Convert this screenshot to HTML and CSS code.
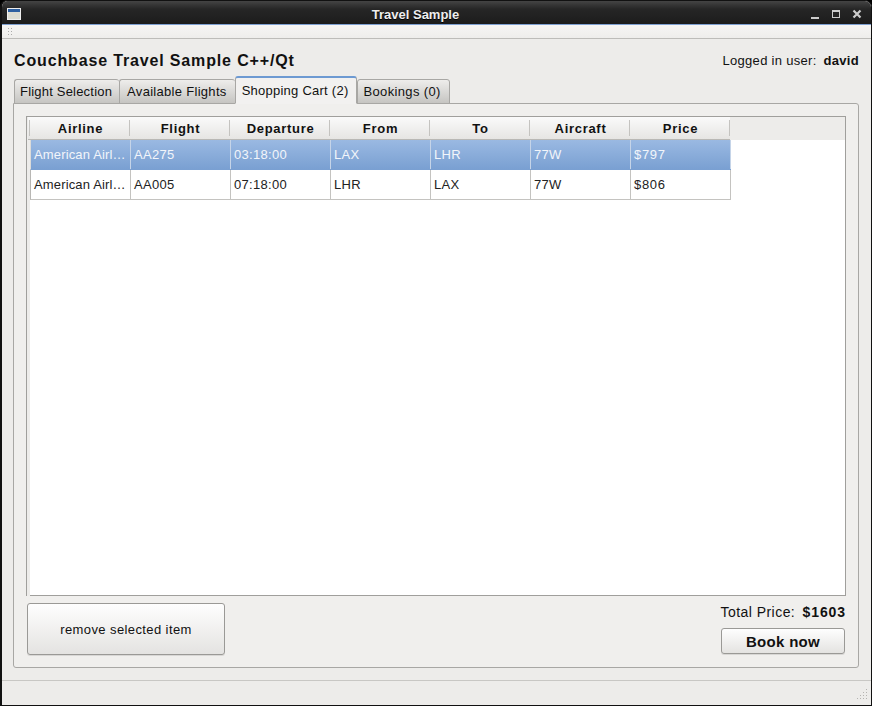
FILE: index.html
```html
<!DOCTYPE html>
<html lang="en">
<head>
  <meta charset="UTF-8">
  <title>Travel Sample</title>
  <link rel="stylesheet" href="styles.css">
</head>
<body>
  <div class="window">
    <div class="titlebar">
      <span class="win-icon"></span>
      <span class="win-title">Travel Sample</span>
      <div class="win-buttons">
        <svg width="12" height="12" viewBox="0 0 12 12"><rect x="2" y="9" width="8" height="2" fill="#ccc"/></svg>
        <svg width="12" height="12" viewBox="0 0 12 12"><rect x="2.5" y="2.5" width="7" height="7" fill="none" stroke="#ccc" stroke-width="1"/><rect x="2" y="2" width="8" height="2" fill="#ccc"/></svg>
        <svg width="12" height="12" viewBox="0 0 12 12"><path d="M2.5 2.5 L9.5 9.5 M9.5 2.5 L2.5 9.5" stroke="#ccc" stroke-width="2.2"/></svg>
      </div>
    </div>
    <div class="toolbar"><span class="grip"></span></div>

    <div class="content">
      <div class="top-row">
        <h1>Couchbase Travel Sample C++/Qt</h1>
        <div class="user">Logged in user: <b>david</b></div>
      </div>

      <div class="tabs">
        <div class="tab">Flight Selection</div>
        <div class="tab">Available Flights</div>
        <div class="tab active">Shopping Cart (2)</div>
        <div class="tab">Bookings (0)</div>
      </div>

      <div class="panel">
        <div class="table-box">
          <div class="thead">
            <div class="th">Airline</div>
            <div class="th">Flight</div>
            <div class="th">Departure</div>
            <div class="th">From</div>
            <div class="th">To</div>
            <div class="th">Aircraft</div>
            <div class="th">Price</div>
          </div>
          <div class="tbody">
            <div class="row selected">
              <div class="td">American Airl…</div>
              <div class="td">AA275</div>
              <div class="td">03:18:00</div>
              <div class="td">LAX</div>
              <div class="td">LHR</div>
              <div class="td">77W</div>
              <div class="td">$797</div>
            </div>
            <div class="row">
              <div class="td">American Airl…</div>
              <div class="td">AA005</div>
              <div class="td">07:18:00</div>
              <div class="td">LHR</div>
              <div class="td">LAX</div>
              <div class="td">77W</div>
              <div class="td">$806</div>
            </div>
          </div>
        </div>

        <div class="bottom-row">
          <button class="btn remove">remove selected item</button>
          <div class="checkout">
            <div class="total">Total Price: <b>$1603</b></div>
            <button class="btn book">Book now</button>
          </div>
        </div>
      </div>
    </div>

    <div class="statusbar">
      <svg class="size-grip" width="11" height="11" viewBox="0 0 11 11" fill="#b4b3b0">
        <rect x="9" y="0" width="1" height="1"/>
        <rect x="6" y="3" width="1" height="1"/><rect x="9" y="3" width="1" height="1"/>
        <rect x="3" y="6" width="1" height="1"/><rect x="6" y="6" width="1" height="1"/><rect x="9" y="6" width="1" height="1"/>
        <rect x="0" y="9" width="1" height="1"/><rect x="3" y="9" width="1" height="1"/><rect x="6" y="9" width="1" height="1"/><rect x="9" y="9" width="1" height="1"/>
      </svg>
    </div>
  </div>
</body>
</html>
```
FILE: styles.css
```css
html, body {
  margin: 0;
  padding: 0;
  height: 100%;
  overflow: hidden;
  background: #000;
}
.window {
  width: 872px;
  height: 706px;
  display: flex;
  flex-direction: column;
  box-sizing: border-box;
  background: #edecea;
  font-family: "Liberation Sans", Arial, sans-serif;
  font-size: 13px;
  letter-spacing: 0.3px;
  color: #111;
  border-left: 2px solid #111;
  border-right: 1px solid #111;
  border-bottom: 1px solid #111;
  border-top: 1px solid #111;
  border-radius: 7px 7px 0 0;
  overflow: hidden;
}
.titlebar {
  height: 20px;
  padding-top: 3px;
  flex: none;
  display: flex;
  align-items: center;
  justify-content: center;
  padding-right: 42px;
  position: relative;
  background: linear-gradient(to bottom, #444, #262626 35%, #1c1c1c);
  border-bottom: 1px solid #7d9fd0;
  color: #eee;
  font-weight: bold;
}
.win-title {
  letter-spacing: 0;
  text-shadow: 0 1px 0 #000;
}
.win-icon {
  position: absolute;
  left: 5px;
  top: 7px;
  width: 12px;
  height: 10px;
  background: linear-gradient(to bottom, #2d5fa0 3px, #dcdcd2 3px);
  border: 1px solid #eee;
}
.win-buttons {
  position: absolute;
  right: 8px;
  top: 7px;
  display: flex;
  gap: 9px;
}
.toolbar {
  height: 13px;
  flex: none;
  display: flex;
  align-items: center;
  background: linear-gradient(to bottom, #f6f5f4, #eeedeb);
  border-bottom: 1px solid #bdbcb9;
  padding-left: 5px;
}
.grip {
  width: 5px;
  height: 9px;
  background-image: radial-gradient(#aaa 40%, transparent 45%);
  background-size: 3px 3px;
}
.content {
  flex: 1;
  display: flex;
  flex-direction: column;
  padding: 0 12px 12px 11px;
  min-height: 0;
}
.top-row {
  height: 38px;
  flex: none;
  display: flex;
  justify-content: space-between;
  align-items: flex-start;
  padding-top: 13px;
  box-sizing: border-box;
}
.top-row h1 {
  margin: 0 0 0 1px;
  font-size: 16px;
  line-height: 18px;
  letter-spacing: 0.85px;
  font-weight: bold;
}
.user {
  line-height: 17px;
}
.user b {
  margin-left: 3px;
}
.tabs {
  display: flex;
  align-items: flex-end;
  height: 27px;
  flex: none;
  padding-left: 1px;
  position: relative;
  z-index: 1;
  margin-bottom: -1px;
  letter-spacing: 0.2px;
}
.tab {
  height: 23px;
  line-height: 24px;
  padding: 0 7px 0 5px;
  background: linear-gradient(to bottom, #eeedeb, #c6c5c2);
  border: 1px solid #a8a7a4;
  border-right: none;
  border-radius: 3px 3px 0 0;
  white-space: nowrap;
}
.tab:nth-child(2) {
  padding: 0 8px 0 7px;
  letter-spacing: 0.3px;
}
.tab:nth-child(4) {
  border-right: 1px solid #a8a7a4;
  padding: 0 8px 0 6px;
  letter-spacing: 0.35px;
}
.tab.active {
  height: 25px;
  line-height: 25px;
  background: #f2f1f0;
  border: 1px solid #a8a7a4;
  border-top: 2px solid #6d9ad2;
  border-bottom: 1px solid #f2f1f0;
  padding: 0 7px 0 6px;
  letter-spacing: 0.25px;
}
.panel {
  flex: 1;
  min-height: 0;
  display: flex;
  flex-direction: column;
  border: 1px solid #a8a7a4;
  border-radius: 0 3px 3px 3px;
  background: #f0efed;
  padding: 12px;
}
.table-box {
  flex: 1;
  min-height: 0;
  background: #fff;
  border: 1px solid #a09f9c;
}
.thead {
  display: flex;
  height: 23px;
  background: #edecea;
  padding-left: 1px;
}
.th {
  width: 100px;
  box-sizing: border-box;
  padding-left: 1px;
  text-align: center;
  line-height: 24px;
  font-weight: bold;
  letter-spacing: 0.7px;
  background: linear-gradient(to bottom, #fafafa, #e6e5e3);
  border-bottom: 1px solid #b9b8b5;
  position: relative;
}
.th:first-child {
  width: 102px;
  padding-left: 3px;
}
.th::after {
  content: "";
  position: absolute;
  right: 0;
  top: 3px;
  bottom: 3px;
  width: 1px;
  background: #c4c3c0;
}
.th:first-child::before {
  content: "";
  position: absolute;
  left: 1px;
  top: 3px;
  bottom: 3px;
  width: 1px;
  background: #c4c3c0;
}
.tbody {
  height: 456px;
  border-left: 3px solid #edecea;
}
.row {
  display: flex;
  height: 30px;
  box-sizing: border-box;
  width: 701px;
  border-left: 1px solid #b8b7b4;
  border-bottom: 1px solid #c4c3c0;
}
.td {
  width: 100px;
  box-sizing: border-box;
  padding-left: 3px;
  line-height: 29px;
  border-right: 1px solid #c4c3c0;
  white-space: nowrap;
  overflow: hidden;
  color: #222;
}
.td:first-child {
  letter-spacing: 0.15px;
}
.td:last-child {
  letter-spacing: 0.7px;
}
.row.selected {
  background: linear-gradient(to bottom, #9ab9e2, #7aa0d2);
  border-bottom-color: #7aa0d2;
  border-left-color: #dcdbd9;
}
.row.selected .td {
  color: #f2f5fa;
  border-right-color: #c5d4e8;
}
.bottom-row {
  flex: none;
  display: flex;
  justify-content: space-between;
  padding-top: 7px;
}
.btn {
  font-family: inherit;
  letter-spacing: inherit;
  color: #111;
  background: linear-gradient(to bottom, #fefefe, #e4e3e1);
  border: 1px solid #9a9996;
  border-radius: 3px;
  box-shadow: 0 1px 0 #d8d7d5;
  padding: 0;
}
.remove {
  width: 198px;
  height: 52px;
  font-size: 13px;
  letter-spacing: 0.4px;
  margin-left: 1px;
}
.checkout {
  display: flex;
  flex-direction: column;
  align-items: flex-end;
  height: 52px;
}
.total {
  font-size: 14px;
  letter-spacing: 0.45px;
  line-height: 17px;
  margin-top: 1px;
  margin-bottom: 7px;
}
.total b {
  margin-left: 3px;
  letter-spacing: 0.9px;
}
.book {
  width: 124px;
  height: 26px;
  font-size: 15px;
  font-weight: bold;
  margin-right: 1px;
}
.statusbar {
  height: 24px;
  flex: none;
  border-top: 1px solid #c8c7c4;
  position: relative;
}
.size-grip {
  position: absolute;
  right: 3px;
  bottom: 5px;
}
```
